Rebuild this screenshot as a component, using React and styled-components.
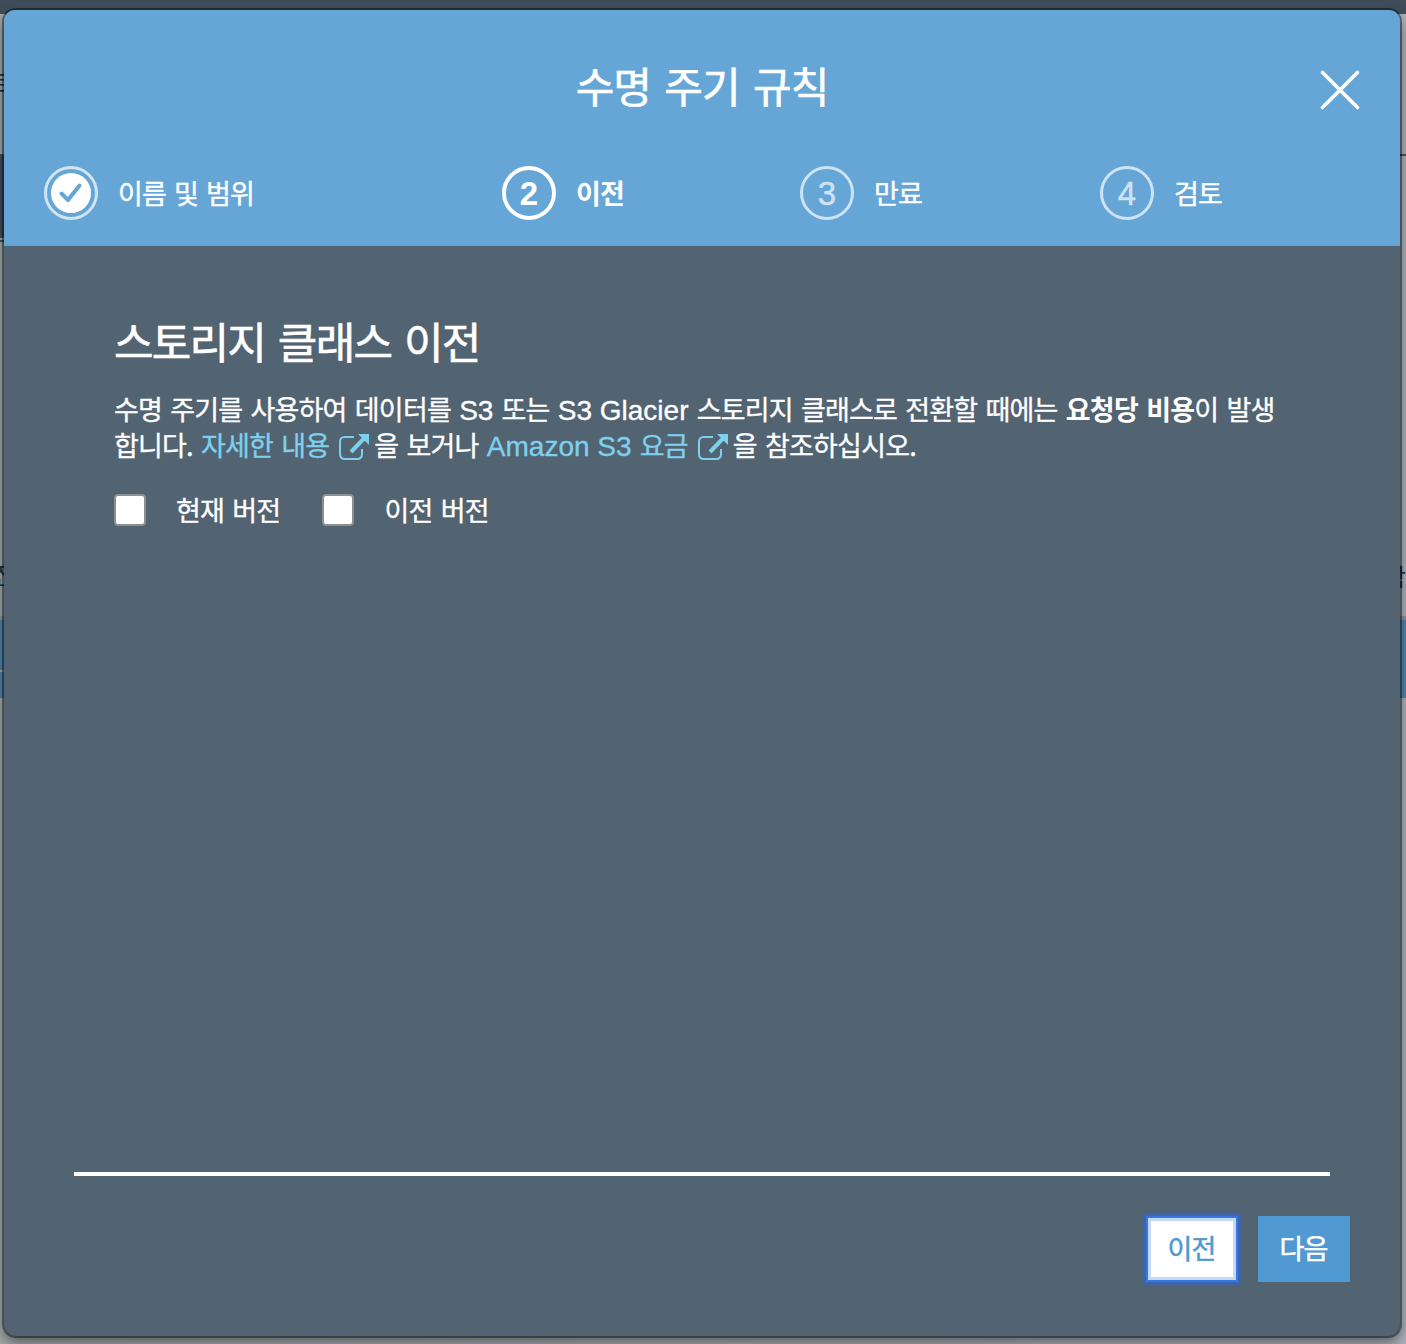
import React from 'react';
import styled, { createGlobalStyle, css } from 'styled-components';

const GlobalStyle = createGlobalStyle`
  *, *::before, *::after { box-sizing: border-box; }
  html, body { margin: 0; padding: 0; }
  body {
    background: #8e989b;
    font-family: "Noto Sans CJK KR", "Liberation Sans", sans-serif;
    color: #fff;
    overflow: hidden;
  }
`;

const Page = styled.div`
  position: relative;
  width: 1406px;
  height: 1344px;
  overflow: hidden;
  background: linear-gradient(90deg, #a0a9ab, #a8b2ba);
`;

const PageBar = styled.div`
  height: 14px;
  background: #3f4d5a;
`;

const PageRow = styled.div`
  display: flex;
  justify-content: space-between;
  height: ${(p) => p.$height}px;
  background: ${(p) => p.$color || 'transparent'};
`;

const Edge = styled.div`
  width: 6px;
  height: 100%;
  display: flex;
  align-items: center;
  justify-content: ${(p) => (p.$right ? 'flex-end' : 'flex-start')};
  background: ${(p) => p.$color || 'transparent'};
  border-top: ${(p) => (p.$rule ? '2px solid #46535f' : '0')};
  color: #29343b;
  font-size: 24px;
  line-height: 24px;
`;

const EdgeText = styled.span`
  margin-left: -7px;
  margin-top: -5px;
`;

const Backdrop = styled.div`
  position: absolute;
  inset: 0;
  padding: 10px 6px 8px 4px;
  display: flex;
`;

const Dialog = styled.section`
  flex: 1;
  display: flex;
  flex-direction: column;
  border-radius: 12px;
  background: #526371;
  box-shadow: 0 0 0 2px rgba(0, 0, 0, 0.4), 0 6px 14px rgba(0, 0, 0, 0.5);
`;

const Header = styled.header`
  height: 236px;
  border-radius: 11px 11px 0 0;
  background: #65a6d7;
`;

const TitleBar = styled.div`
  display: grid;
  grid-template-columns: 80px 1fr 80px;
  align-items: center;
  height: 156px;
`;

const Title = styled.h1`
  grid-column: 2;
  margin: 0 0 6px;
  text-align: center;
  font-size: 42px;
  line-height: 60px;
  font-weight: 400;
  letter-spacing: -1px;
  word-spacing: 5px;
  -webkit-text-stroke: 0.6px currentColor;
`;

const CloseButton = styled.button`
  width: 40px;
  height: 40px;
  margin-top: 4px;
  padding: 0;
  border: 0;
  background: none;
  color: #fff;
  svg { display: block; }
`;

const Steps = styled.ol`
  display: grid;
  grid-template-columns: 458px 298px 300px 1fr;
  margin: 0;
  padding: 0 0 0 40px;
  list-style: none;
`;

const Step = styled.li`
  display: flex;
  align-items: center;
  gap: 20px;
  height: 54px;
  font-size: 27px;
  line-height: 54px;
  letter-spacing: -0.9px;
  word-spacing: 3px;
  font-weight: ${(p) => (p.$active ? 700 : 400)};
  -webkit-text-stroke: ${(p) => (p.$active ? 0 : 0.4)}px currentColor;
`;

const badge = css`
  width: 54px;
  height: 54px;
  border-radius: 50%;
  flex: none;
  display: flex;
  align-items: center;
  justify-content: center;
`;

const NumberBadge = styled.span`
  ${badge}
  border: ${(p) => (p.$active ? 4 : 3)}px solid currentColor;
  color: ${(p) => (p.$active ? '#fff' : 'rgba(255, 255, 255, 0.68)')};
  font-family: "Liberation Sans", Arial, sans-serif;
  font-size: 33px;
  line-height: 50px;
  letter-spacing: 0;
  padding-top: 2px;
`;

const DoneBadge = styled.span`
  ${badge}
  border: 3px solid rgba(255, 255, 255, 0.7);
`;

const Content = styled.div`
  flex: 1;
  padding: 60px 110px 0;
`;

const Heading = styled.h2`
  margin: 0;
  font-size: 43px;
  line-height: 68px;
  font-weight: 400;
  letter-spacing: -1.8px;
  word-spacing: 5px;
  -webkit-text-stroke: 0.6px currentColor;
`;

const Paragraph = styled.p`
  margin: 17px 0 0;
  white-space: nowrap;
  font-size: 27px;
  line-height: 36px;
  letter-spacing: -0.8px;
  word-spacing: 2.9px;
  -webkit-text-stroke: 0.35px currentColor;
  b { -webkit-text-stroke: 0; }
`;

const Latin = styled.span`
  font-family: "Liberation Sans", Arial, sans-serif;
  font-size: 28px;
  line-height: 1;
  letter-spacing: 0;
  word-spacing: 0;
`;

const Link = styled.a`
  color: #7dd0ee;
  text-decoration: none;
  svg { vertical-align: -4px; margin: 0 5px 0 10px; }
`;

const Options = styled.div`
  display: flex;
  gap: 42px;
  margin-top: 27px;
`;

const Option = styled.label`
  display: flex;
  align-items: center;
  gap: 30px;
  height: 40px;
  font-size: 27px;
  letter-spacing: -0.8px;
  word-spacing: 3px;
  line-height: 40px;
  -webkit-text-stroke: 0.35px currentColor;
`;

const CheckBox = styled.input`
  appearance: none;
  width: 32px;
  height: 32px;
  margin: 0;
  border: 2px solid #8d8f90;
  border-radius: 4px;
  background: #fff;
`;

const Divider = styled.hr`
  width: 1256px;
  height: 4px;
  margin: 0 0 0 70px;
  border: 0;
  background: #fff;
`;

const Footer = styled.footer`
  height: 160px;
  padding: 40px 50px 0;
  display: flex;
  justify-content: flex-end;
  gap: 20px;
`;

const Button = styled.button`
  width: 92px;
  height: 66px;
  padding: 0 1px 2px 0;
  border: 0;
  font-family: inherit;
  font-size: 27px;
  line-height: 64px;
  letter-spacing: -0.8px;
  -webkit-text-stroke: 0.5px currentColor;
  color: ${(p) => (p.$primary ? '#fff' : '#5099d2')};
  background: ${(p) => (p.$primary ? '#5099d2' : '#fff')};
  box-shadow: ${(p) =>
    p.$primary
      ? 'none'
      : 'inset 0 0 0 2px #3678e0, inset 0 0 0 5px #c5d8f8, 0 0 3px 2px #2f67ce'};
`;

function CloseIcon() {
  return (
    <svg width="40" height="40" viewBox="0 0 40 40" fill="none" stroke="currentColor" strokeWidth="3.6" strokeLinecap="round">
      <path d="M2.5 2.5 37.5 37.5M37.5 2.5 2.5 37.5" />
    </svg>
  );
}

function DoneIcon() {
  return (
    <svg width="42" height="42" viewBox="0 0 42 42" fill="none">
      <circle cx="21" cy="21" r="20" fill="#fff" />
      <path d="M11.5 21.5 18 28 29.5 13.5" stroke="#65a6d7" strokeWidth="4" strokeLinecap="round" strokeLinejoin="round" />
    </svg>
  );
}

function ExternalIcon() {
  return (
    <svg width="30" height="26" viewBox="0 0 30 26" fill="none" stroke="currentColor">
      <path d="M15 3H5.5A4.5 4.5 0 0 0 1 7.5V20.5A4.5 4.5 0 0 0 5.5 25H18.500A4.500 4.500 0 0 0 23 20.500V15" strokeWidth="2" />
      <path d="M12 18 25 4.500" strokeWidth="4" />
      <path d="M19 0H30V11Z" fill="currentColor" stroke="none" />
    </svg>
  );
}

const steps = [
  { label: '이름 및 범위', done: true },
  { label: '이전', active: true },
  { label: '만료' },
  { label: '검토' },
];

export default function App() {
  return (
    <>
      <GlobalStyle />
      <Page>
        <PageBar />
        <PageRow $height={140}><Edge><EdgeText>트</EdgeText></Edge></PageRow>
        <PageRow $height={84}><Edge $color="#40505c" /><Edge $right $rule /></PageRow>
        <PageRow $height={2} />
        <PageRow $height={2}><Edge $color="#46535f" /></PageRow>
        <PageRow $height={318} />
        <PageRow $height={32}><Edge><EdgeText>전</EdgeText></Edge><Edge $right>함</Edge></PageRow>
        <PageRow $height={24} />
        <PageRow $height={4} $color="#8b9499" />
        <PageRow $height={50} $color="#5085ab" />
        <PageRow $height={2}><Edge /><Edge $right $color="#5085ab" /></PageRow>
        <PageRow $height={26} $color="#5085ab" />

        <Backdrop>
          <Dialog>
            <Header>
              <TitleBar>
                <Title>수명 주기 규칙</Title>
                <CloseButton aria-label="닫기"><CloseIcon /></CloseButton>
              </TitleBar>
              <Steps>
                {steps.map((s, i) => (
                  <Step key={s.label} $active={s.active}>
                    {s.done ? <DoneBadge><DoneIcon /></DoneBadge> : <NumberBadge $active={s.active}>{i + 1}</NumberBadge>}
                    <span>{s.label}</span>
                  </Step>
                ))}
              </Steps>
            </Header>
            <Content>
              <Heading>스토리지 클래스 이전</Heading>
              <Paragraph>
                수명 주기를 사용하여 데이터를 <Latin>S3</Latin> 또는 <Latin>S3 Glacier</Latin> 스토리지 클래스로 전환할 때에는 <b>요청당 비용</b>이 발생<br />
                합니다. <Link>자세한 내용<ExternalIcon /></Link>을 보거나 <Link><Latin>Amazon S3</Latin> 요금<ExternalIcon /></Link>을 참조하십시오.
              </Paragraph>
              <Options>
                <Option><CheckBox type="checkbox" />현재 버전</Option>
                <Option><CheckBox type="checkbox" />이전 버전</Option>
              </Options>
            </Content>
            <Divider />
            <Footer>
              <Button>이전</Button>
              <Button $primary>다음</Button>
            </Footer>
          </Dialog>
        </Backdrop>
      </Page>
    </>
  );
}
